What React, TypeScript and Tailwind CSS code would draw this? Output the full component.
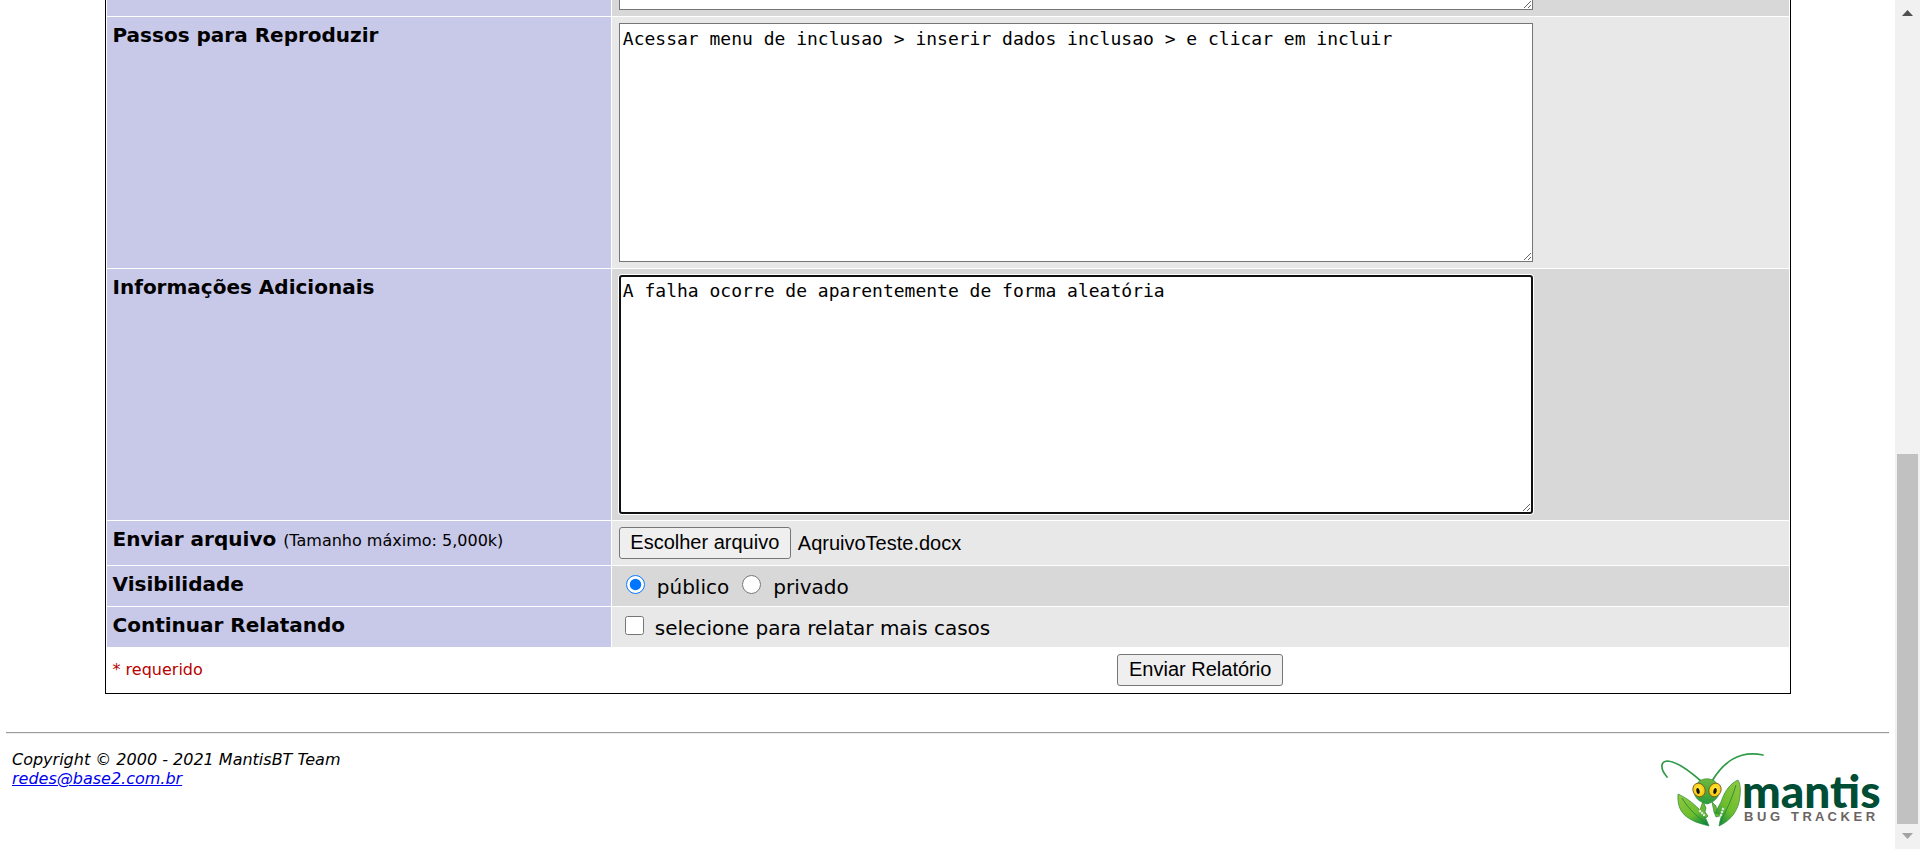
import React, { useState } from "react";

const labelCell = "w-[30%] bg-[#c8c8e8] p-[6px] text-left align-top text-[20px] leading-[25px] font-bold";
const darkCell = "bg-[#d8d8d8] py-[6px] pl-[7px] pr-[6px] align-top";
const lightCell = "bg-[#e8e8e8] py-[6px] pl-[7px] pr-[6px] align-top";
const areaBase =
  "block h-[239px] w-full max-w-[914px] resize bg-white font-['Consolas','DejaVu_Sans_Mono',monospace] text-[18px] leading-[24px] outline-none";
const area = `${areaBase} border border-[#767676] px-[3px] py-[3px]`;
const areaActive = `${areaBase} rounded-[3px] border-2 border-[#101010] px-[2px] py-[2px] shadow-[0_0_0_1px_#ffffff]`;
const button =
  "inline-flex h-8 items-center justify-center whitespace-nowrap rounded-[3px] border border-[#767676] bg-[#efefef] px-[11px] pb-[2px] font-['Arial','Liberation_Sans',sans-serif] text-[20px] leading-[24px]";

function Logo() {
  return (
    <svg viewBox="0 0 218 76" className="h-[76px] w-[218px] overflow-visible" role="img" aria-label="Mantis Bug Tracker">
      <defs>
        <linearGradient id="leaf" x1="0.2" y1="0" x2="0.8" y2="1">
          <stop offset="0" stopColor="#8fc640" />
          <stop offset="0.6" stopColor="#6dbd2c" />
          <stop offset="1" stopColor="#0f8a3e" />
        </linearGradient>
        <linearGradient id="leafRight" x1="0.8" y1="0" x2="0.2" y2="1">
          <stop offset="0" stopColor="#8fc640" />
          <stop offset="0.6" stopColor="#6dbd2c" />
          <stop offset="1" stopColor="#0f8a3e" />
        </linearGradient>
        <linearGradient id="head" x1="0" y1="0" x2="0" y2="1">
          <stop offset="0" stopColor="#6fb93d" />
          <stop offset="1" stopColor="#2b9a3d" />
        </linearGradient>
        <radialGradient id="eye" cx="0.5" cy="0.45" r="0.6">
          <stop offset="0" stopColor="#fff04a" />
          <stop offset="1" stopColor="#f5bd00" />
        </radialGradient>
      </defs>
      <g fill="none" stroke="#2f9a48" strokeLinecap="round">
        <path d="M6 25C-1 17 -1 9 7 9C17 10 31 21 41 30" strokeWidth="1.7" />
        <path d="M51 29C62 11 77 -2 102 3" strokeWidth="1.7" />
      </g>
      <path d="M42 49L45 56L44 60L47 64L45 66L38 61Z" fill="#6cb832" stroke="#28883b" strokeWidth="0.7" />
      <path d="M51 50L55 54L56 60L62 63L55 65L53 60Z" fill="#6cb832" stroke="#28883b" strokeWidth="0.7" />
      <path d="M17 42C16 54 20 62 29 67C35 71 42 72 48 74C45 66 43 63 38 57C31 50 24 45 17 42Z" fill="url(#leaf)" stroke="#26893b" strokeWidth="0.7" />
      <path d="M77 28C68 32 63 41 60 50L54 61L61 63C59 67 59 70 58 74C71 68 78 57 79 44C80 37 79 31 77 28Z" fill="url(#leafRight)" stroke="#26893b" strokeWidth="0.7" />
      <path d="M21 46C28 58 38 66 46 72M75 33C71 47 65 59 59 71" stroke="#15853b" strokeWidth="0.8" fill="none" />
      <g fill="#ffffff" stroke="#8db88e" strokeWidth="0.4">
        <circle cx="39" cy="59" r="1.2" />
        <circle cx="41" cy="61" r="1.2" />
        <circle cx="43" cy="63" r="1.2" />
        <circle cx="62" cy="57" r="1.2" />
        <circle cx="61" cy="60" r="1.2" />
        <circle cx="60" cy="63" r="1.2" />
      </g>
      <path d="M36 32C39 25 53 25 56 32C62 36 58 48 49 51Q46 53 43 51C33 48 30 37 36 32Z" fill="url(#head)" stroke="#2b8d38" strokeWidth="0.6" />
      <ellipse cx="38" cy="38" rx="6" ry="7" transform="rotate(-25 38 38)" fill="url(#eye)" stroke="#75541c" strokeWidth="0.8" />
      <ellipse cx="54" cy="38" rx="6" ry="7" transform="rotate(25 54 38)" fill="url(#eye)" stroke="#75541c" strokeWidth="0.8" />
      <ellipse cx="37" cy="39" rx="1.7" ry="3" transform="rotate(-12 37 39)" fill="#17120c" />
      <ellipse cx="54" cy="39" rx="1.7" ry="3" transform="rotate(12 54 39)" fill="#17120c" />
      <text x="81" y="56" fontFamily="Lato, sans-serif" fontWeight="900" fontSize="46" fill="#004d35">mantis</text>
      <text x="83" y="69" fontFamily="'Liberation Sans', sans-serif" fontWeight="700" fontSize="13" fill="#6b6462">
        {"B U G \u00a0\u00a0T R A C K E R"}
      </text>
    </svg>
  );
}

function Scrollbar() {
  return (
    <div className="flex w-[25px] shrink-0 flex-col items-center bg-[#f1f1f1]" aria-hidden="true">
      <svg className="h-[26px] w-full" viewBox="0 0 25 26">
        <path d="M7 16L12.500 10L18 16Z" fill="#505050" />
      </svg>
      <div className="flex w-full flex-1 flex-col px-[2px]">
        <div className="grow-[428]" />
        <div className="w-full grow-[370] bg-[#c1c1c1]" />
      </div>
      <svg className="h-[25px] w-full" viewBox="0 0 25 25">
        <path d="M7 9L12.500 15L18 9Z" fill="#a3a3a3" />
      </svg>
    </div>
  );
}

export default function App() {
  const [description, setDescription] = useState("");
  const [steps, setSteps] = useState("Acessar menu de inclusao > inserir dados inclusao > e clicar em incluir");
  const [info, setInfo] = useState("A falha ocorre de aparentemente de forma aleatória");
  const [fileName, setFileName] = useState("AqruivoTeste.docx");
  const [visibility, setVisibility] = useState("publico");
  const [keepReporting, setKeepReporting] = useState(false);

  return (
    <div className="flex h-screen overflow-hidden bg-white font-['Verdana','DejaVu_Sans',sans-serif] text-black">
      <main className="min-w-0 flex-1 overflow-hidden px-[6px]">
        <form className="-mt-[237px]" onSubmit={(e) => e.preventDefault()}>
          <table className="mx-auto w-[1686px] max-w-full border-separate border-spacing-px border border-black">
            <tbody>
              <tr>
                <th scope="row" className={labelCell} />
                <td className={darkCell} colSpan={2}>
                  <textarea aria-label="Descrição" className={area} value={description} onChange={(e) => setDescription(e.target.value)} />
                </td>
              </tr>
              <tr>
                <th scope="row" className={labelCell}>
                  <label htmlFor="steps">Passos para Reproduzir</label>
                </th>
                <td className={lightCell} colSpan={2}>
                  <textarea id="steps" spellCheck={false} className={area} value={steps} onChange={(e) => setSteps(e.target.value)} />
                </td>
              </tr>
              <tr>
                <th scope="row" className={labelCell}>
                  <label htmlFor="info">Informações Adicionais</label>
                </th>
                <td className={darkCell} colSpan={2}>
                  <textarea id="info" spellCheck={false} className={areaActive} value={info} onChange={(e) => setInfo(e.target.value)} />
                </td>
              </tr>
              <tr>
                <th scope="row" className={labelCell}>
                  Enviar arquivo <span className="text-[16px] font-normal">(Tamanho máximo: 5,000k)</span>
                </th>
                <td className={lightCell} colSpan={2}>
                  <div className="flex items-center gap-[7px]">
                    <label htmlFor="file" className={`${button} w-[172px]`}>
                      Escolher arquivo
                    </label>
                    <input
                      id="file"
                      type="file"
                      className="hidden"
                      onChange={(e) => setFileName(e.target.files?.[0]?.name ?? "")}
                    />
                    <span className="font-['Arial','Liberation_Sans',sans-serif] text-[20px] leading-[24px]">{fileName}</span>
                  </div>
                </td>
              </tr>
              <tr>
                <th scope="row" className={labelCell}>Visibilidade</th>
                <td className={`${darkCell} h-10`} colSpan={2}>
                  <div className="flex items-baseline gap-[13px] pl-[7px] pt-[3px] text-[20px] leading-[24px]">
                    <label className="flex items-baseline gap-3">
                      <input
                        type="radio"
                        name="visibility"
                        className="size-[19px]"
                        checked={visibility === "publico"}
                        onChange={() => setVisibility("publico")}
                      />
                      público
                    </label>
                    <label className="flex items-baseline gap-3">
                      <input
                        type="radio"
                        name="visibility"
                        className="size-[19px]"
                        checked={visibility === "privado"}
                        onChange={() => setVisibility("privado")}
                      />
                      privado
                    </label>
                  </div>
                </td>
              </tr>
              <tr>
                <th scope="row" className={labelCell}>Continuar Relatando</th>
                <td className={`${lightCell} h-10`} colSpan={2}>
                  <label className="flex items-baseline gap-[11px] pl-[6px] pt-[3px] text-[20px] leading-[24px]">
                    <input
                      type="checkbox"
                      className="size-[19px]"
                      checked={keepReporting}
                      onChange={(e) => setKeepReporting(e.target.checked)}
                    />
                    selecione para relatar mais casos
                  </label>
                </td>
              </tr>
              <tr>
                <td className="p-[6px] text-[16px] leading-[24px] text-[#b80000]">* requerido</td>
                <td className="p-[6px] text-center" colSpan={2}>
                  <button type="submit" className={`${button} align-top`}>
                    Enviar Relatório
                  </button>
                </td>
              </tr>
            </tbody>
          </table>
        </form>
        <hr className="mt-[38px] border-t border-b border-t-[#9a9a9a] border-b-[#eeeeee]" />
        <footer className="flex items-start justify-between px-[6px] pt-4">
          <address className="text-[16px] leading-[19px]">
            <div>Copyright © 2000 - 2021 MantisBT Team</div>
            <a href="mailto:redes@base2.com.br" className="text-[#0000ee] underline">
              redes@base2.com.br
            </a>
          </address>
          <div className="pr-1 pt-[2px]">
            <Logo />
          </div>
        </footer>
      </main>
      <Scrollbar />
    </div>
  );
}
